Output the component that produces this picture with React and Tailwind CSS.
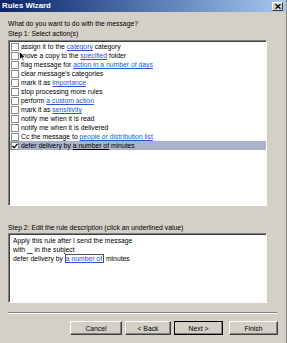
import React from 'react'

const actions = [
    [['assign it to the '], ['category', true], [' category']],
    [['move a copy to the '], ['specified', true], [' folder']],
    [['flag message for '], ['action in a number of days', true]],
    [["clear message's categories"]],
    [['mark it as '], ['importance', true]],
    [['stop processing more rules']],
    [['perform '], ['a custom action', true]],
    [['mark it as '], ['sensitivity', true]],
    [['notify me when it is read']],
    [['notify me when it is delivered']],
    [['Cc the message to '], ['people or distribution list', true]],
]

function Checkbox({ checked }) {
    return (
        <div className="w-[8px] h-[8px] border border-[#8a8a8a] bg-white mr-[2px] shrink-0 flex items-center justify-center">
            {checked && (
                <svg width="6" height="6" viewBox="0 0 6 6">
                    <path d="M0.5 3 L2.2 4.8 L5.5 0.8" stroke="#000" strokeWidth="1.3" fill="none" />
                </svg>
            )}
        </div>
    )
}

function Button({ label, width, primary }) {
    return (
        <div
            className={`${width} h-[14px] bg-[#d4d0c8] flex items-center justify-center border ${
                primary ? 'border-black' : 'border-[#d4d0c8] border-t-white border-l-white border-b-[#404040] border-r-[#404040]'
            } shadow-[inset_-1px_-1px_0_#808080]`}
        >
            {label}
        </div>
    )
}

export default function App() {
    return (
        <div className="relative w-[287px] h-[343px] bg-[#d4d0c8] flex flex-col overflow-hidden border-r border-[#8c8c8c] font-['Liberation_Sans',Arial,sans-serif] text-[6.8px] leading-[9px] text-black">
            {/* title bar */}
            <div className="h-[12px] shrink-0 bg-linear-to-r from-[#0a246a] to-[#a6caf0] flex items-center justify-between pl-[2px] pr-[3px]">
                <span className="text-white font-bold text-[7.8px] leading-[12px]">Rules Wizard</span>
                <div className="w-[11px] h-[9px] bg-[#d4d0c8] border border-t-white border-l-white border-b-[#404040] border-r-[#404040] flex items-center justify-center">
                    <svg width="6" height="5" viewBox="0 0 6 5">
                        <path d="M0.5 0.3 L5.5 4.7 M5.5 0.3 L0.5 4.7" stroke="#000" strokeWidth="1.3" />
                    </svg>
                </div>
            </div>

            <div className="pl-[8px] pt-[7px] flex flex-col">
                <div className="h-[10px] leading-[10px]">What do you want to do with the message?</div>
                <div className="h-[10px] leading-[10px]">Step 1: Select action(s)</div>

                <div className="mt-[1px] w-[259px] h-[166px] bg-white border border-[#808080] border-b-white border-r-white shadow-[inset_1px_1px_0_#404040] pt-[1px] pl-[1px] flex flex-col">
                    {actions.map((row, i) => (
                        <div key={i} className="h-[9px] flex items-center pl-[1px]">
                            <Checkbox />
                            <span className="whitespace-nowrap">
                                {row.map(([t, link], j) =>
                                    link ? (
                                        <span key={j} className="text-[#2356d8] underline">{t}</span>
                                    ) : (
                                        <span key={j}>{t}</span>
                                    )
                                )}
                            </span>
                        </div>
                    ))}
                    <div className="h-[9px] flex items-center pl-[1px] bg-[#aab2cb]">
                        <Checkbox checked />
                        <span className="whitespace-nowrap">
                            defer delivery by <span className="underline">a number of</span> minutes
                        </span>
                    </div>
                </div>

                <div className="mt-[17px] h-[10px] leading-[10px]">Step 2: Edit the rule description (click an underlined value)</div>

                <div className="w-[259px] h-[70px] bg-white border border-[#808080] border-b-white border-r-white shadow-[inset_1px_1px_0_#404040] pt-[2px] pl-[4px] flex flex-col">
                    <div className="h-[9px]">Apply this rule after I send the message</div>
                    <div className="h-[9px] whitespace-nowrap">
                        with <span className="text-[#2356d8] underline">{'\u00a0_'}</span> in the subject
                    </div>
                    <div className="h-[9px] flex items-center whitespace-nowrap">
                        defer delivery by&nbsp;
                        <span className="border border-[#505050] h-[9px] leading-[7px] pr-[1px] text-[#2356d8] underline">a number of</span>
                        &nbsp;minutes
                    </div>
                </div>

                <div className="mt-[9px] w-[269px] h-[2px] border-t border-[#808080] border-b border-b-white" />

                <div className="mt-[7px] flex pl-[62px]">
                    <Button label="Cancel" width="w-[52px]" />
                    <div className="w-[3px]" />
                    <Button label="< Back" width="w-[46px]" />
                    <div className="w-[3px]" />
                    <Button label="Next >" width="w-[49px]" primary />
                    <div className="w-[6px]" />
                    <Button label="Finish" width="w-[49px]" />
                </div>
            </div>

            {/* mouse pointer */}
            <svg className="absolute left-[19px] top-[51px]" width="7" height="11" viewBox="0 0 7 11">
                <path d="M0.5 0.5 L0.5 8.5 L2.5 6.8 L4 10 L5.2 9.4 L3.8 6.3 L6.3 6.3 Z" fill="#000" stroke="#fff" strokeWidth="0.8" />
            </svg>
        </div>
    )
}
